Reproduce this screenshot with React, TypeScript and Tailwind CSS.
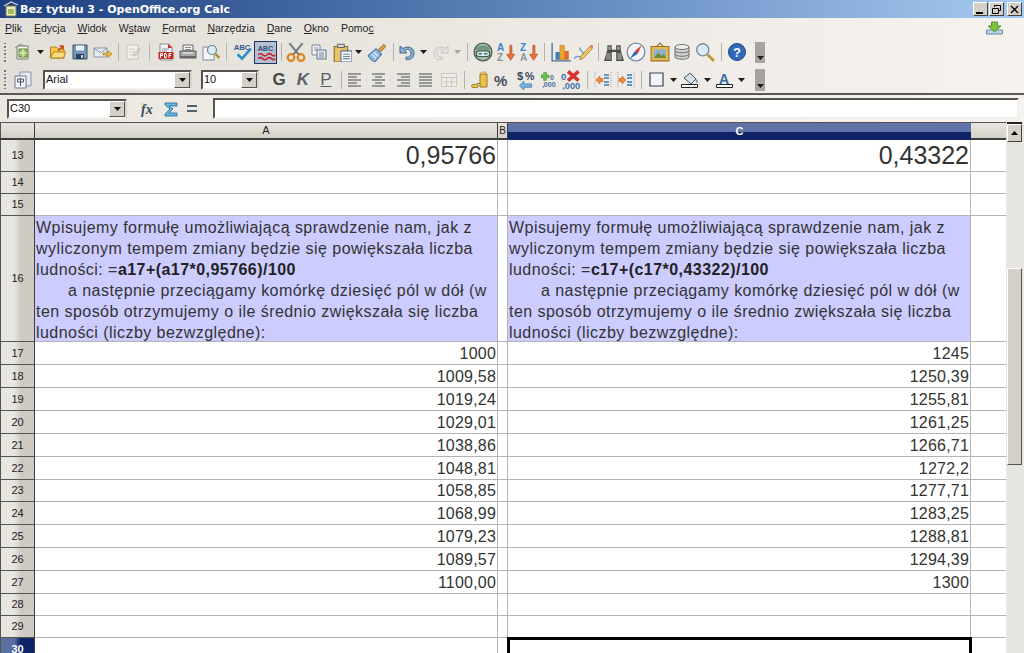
import type { ReactNode } from "react";

const arial = "font-['Liberation_Sans',Arial,sans-serif]";
const tahoma = "font-['DejaVu_Sans',Tahoma,sans-serif]";

function Svg({ children, size = "w-[18px] h-[18px]" }: { children: ReactNode; size?: string }) {
  return (
    <svg viewBox="0 0 18 18" className={size}>
      {children}
    </svg>
  );
}

const NewDoc = () => (
  <Svg>
    <path d="M3 3h11v13H3z" fill="#f4f4ea" stroke="#6f7a66" />
    <path d="M5 6h8v8H5z" fill="#a4c46c" stroke="#5b7a34" />
    <path d="M9 6v8M5 10h8" stroke="#eef5dc" />
    <path d="M1 5l5-4 5 2" fill="none" stroke="#8a9a80" />
  </Svg>
);
const OpenFolder = () => (
  <Svg size="w-[20px] h-[18px]">
    <path d="M1.5 15V4h6l1.5 2h6v9z" fill="#f6c64a" stroke="#b0801c" />
    <path d="M1.5 15l3-6h12l-2 6z" fill="#fbdc7c" stroke="#b0801c" />
    <path d="M9 8l5-5M10.5 3H14v3.5" fill="none" stroke="#c8471a" strokeWidth="1.6" />
  </Svg>
);
const Save = () => (
  <Svg>
    <path d="M2 2h14v14H2z" fill="#7797b8" stroke="#3a5270" />
    <path d="M5 2.5h8v5H5z" fill="#eef2f6" />
    <path d="M5 11h8v5H5z" fill="#26405e" />
    <path d="M10 12h2v3h-2z" fill="#c6d2de" />
  </Svg>
);
const Mail = () => (
  <Svg size="w-[20px] h-[18px]">
    <path d="M1 5h13v9H1z" fill="#e6ecf5" stroke="#8793a8" />
    <path d="M1 5l6.500 5L14 5" fill="none" stroke="#8793a8" />
    <path d="M10 10h5V7.500l4 3.500-4 3.500V12h-5z" fill="#f3c03e" stroke="#a87c1a" strokeWidth=".7" />
  </Svg>
);
const EditDoc = () => (
  <Svg>
    <path d="M3 2h11v14H3z" fill="#f2f0ea" stroke="#c6c4bc" />
    <path d="M5 6h6M5 9h6M5 12h4" stroke="#cfcdc6" />
    <path d="M9 12l6-7 1.500 1.500-6 7z" fill="#dedcd4" stroke="#c0beb6" />
  </Svg>
);
const Pdf = () => (
  <Svg>
    <path d="M3 1h9l3 3v13H3z" fill="#f2f2f4" stroke="#8a8a92" />
    <path d="M11 1l4 4h-4z" fill="#c22" />
    <path d="M1.500 9h15v7h-15z" fill="#c42a24" />
    <path d="M5 6h7M5 8h5" stroke="#8d96b0" />
    <path d="M3.500 15v-4.500h2v2h-2M7.500 15v-4.500h1.500l.5 2-.5 2.500zM12 15v-4.500h2.500M12 12.500h2" fill="none" stroke="#fff" />
  </Svg>
);
const Printer = () => (
  <Svg size="w-[20px] h-[18px]">
    <path d="M5 2h10v6H5z" fill="#f4f4f2" stroke="#66686c" />
    <path d="M7 4.500h6M7 6.500h6" stroke="#8a8c90" />
    <path d="M2 8h16v7H2z" fill="#a8aaa8" stroke="#55575a" />
    <path d="M2.500 13h15v2h-15z" fill="#66686a" />
    <path d="M5 10h10" stroke="#e4e4e0" strokeWidth="1.400" />
  </Svg>
);
const Preview = () => (
  <Svg size="w-[20px] h-[18px]">
    <path d="M2 4h11v13H2z" fill="#f5f5f5" stroke="#7d8ca2" />
    <circle cx="11" cy="7" r="4.500" fill="#d9ebf6" stroke="#70808c" strokeWidth="1.200" />
    <path d="M14 10.500l4.500 4.500" stroke="#b48c30" strokeWidth="2.400" />
  </Svg>
);
const Spell = () => (
  <Svg size="w-[22px] h-[20px]">
    <text x="1.500" y="7.500" fontSize="7" fontWeight="700" fill="#335a92" className={arial}>ABC</text>
    <path d="M5 11l4 4 8-9" fill="none" stroke="#2f8ec8" strokeWidth="2.400" />
  </Svg>
);
const SpellAuto = () => (
  <Svg size="w-[20px] h-[20px]">
    <text x="1.500" y="8" fontSize="6.500" fontWeight="700" fill="#2f4f7a" className={arial}>ABC</text>
    <path d="M2 11.500q2-2 4 0t4 0 4 0 3 0M2 15q2-2 4 0t4 0 4 0 3 0" fill="none" stroke="#c8222a" strokeWidth="1.400" />
  </Svg>
);
const Scissors = () => (
  <Svg size="w-[20px] h-[20px]">
    <path d="M3 1l9 11M15 1L6 12" stroke="#74787c" strokeWidth="1.800" />
    <circle cx="4.500" cy="14" r="3" fill="none" stroke="#dd8420" strokeWidth="2" />
    <circle cx="13.500" cy="14" r="3" fill="none" stroke="#dd8420" strokeWidth="2" />
  </Svg>
);
const Copy = () => (
  <Svg>
    <path d="M2 2h8v10H2z" fill="#f0f2f6" stroke="#7a8698" />
    <path d="M4 5h4M4 7h4" stroke="#8a96a8" />
    <path d="M7 7h9v9H7z" fill="#e6eaf2" stroke="#64748a" />
    <path d="M9 10h5M9 12h5M9 14h5" stroke="#7a869a" />
  </Svg>
);
const Paste = () => (
  <Svg size="w-[20px] h-[20px]">
    <path d="M2 4h12v14H2z" fill="#e9c36c" stroke="#8f6b20" />
    <path d="M5 2h6v3H5z" fill="#d8d8d4" stroke="#6a6a66" />
    <path d="M8 8h10v10H8z" fill="#f0f3f8" stroke="#64748a" />
    <path d="M10 11h6M10 13h6M10 15h6" stroke="#7a869a" />
  </Svg>
);
const Brush = () => (
  <Svg size="w-[20px] h-[20px]">
    <path d="M11 7l5-5 2 2-5 5z" fill="#d2a248" stroke="#8a6a24" strokeWidth=".7" />
    <path d="M2 12l7-6 5 5-6 7c-2-1-5-3-6-6z" fill="#8fb8e0" stroke="#4b76a6" />
    <path d="M5 11l4 4M7 9l4 4" stroke="#e6f0fa" />
  </Svg>
);
const Undo = ({ off }: { off?: boolean }) => (
  <Svg size={off ? "w-[18px] h-[18px] -scale-x-100" : "w-[18px] h-[18px]"}>
    <path
      d="M2 3v7h7L6.500 7.500C9 5.500 13 6.500 13 10s-3 4.500-5 4v2.500c5 1 8-2 8-6.500 0-5.500-6-7.500-11-4.500z"
      fill={off ? "#e8e6e0" : "#88aed2"}
      stroke={off ? "#c4c2bc" : "#44688e"}
    />
  </Svg>
);
const Navigator = () => (
  <Svg size="w-[20px] h-[20px]">
    <circle cx="9" cy="9" r="8" fill="#a4bca0" stroke="#4c5a54" strokeWidth="1.200" />
    <path d="M2 7c3-5 11-5 14 0z" fill="#6f9678" />
    <rect x="3" y="8" width="12" height="5" rx="2.500" fill="#e2ebe6" stroke="#3c5a58" />
    <path d="M5 10.500h3M10 10.500h3" stroke="#2f6f7c" strokeWidth="1.400" />
  </Svg>
);
const SortAZ = ({ flip }: { flip?: boolean }) => (
  <Svg size="w-[20px] h-[20px]">
    <text x="1" y="8" fontSize="9" fontWeight="700" fill="#3a84cc" className={arial}>{flip ? "Z" : "A"}</text>
    <text x="1" y="17" fontSize="9" fontWeight="700" fill="#8a949c" className={arial}>{flip ? "A" : "Z"}</text>
    <path d="M12.500 3h1.800v8h2.500l-3.600 5.500L9.500 11h3z" fill="#e8703a" stroke="#b0481c" strokeWidth=".6" />
  </Svg>
);
const Chart = () => (
  <Svg size="w-[20px] h-[20px]">
    <path d="M1 1v16h17" fill="none" stroke="#4c6f94" strokeWidth="1.200" />
    <path d="M4 9h4v7H4z" fill="#3f80c4" />
    <path d="M8 3h4v13H8z" fill="#eca42c" stroke="#b07c20" strokeWidth=".5" />
    <path d="M12 8h4v8h-4z" fill="#e26a2c" />
  </Svg>
);
const Pen = () => (
  <Svg size="w-[20px] h-[20px]">
    <path d="M1 15c3-5 6 1 8-3s-5-4-2-7" fill="none" stroke="#6f9ed0" strokeWidth="1.300" />
    <path d="M7 13l9-10 2 2-9 10-3 1z" fill="#f0c868" stroke="#a8782c" strokeWidth=".7" />
    <path d="M15 4l2 2 1.500-2-1.500-1.500z" fill="#e07c70" />
  </Svg>
);
const Binoculars = () => (
  <Svg size="w-[20px] h-[20px]">
    <path d="M3 3h4v4h4V3h4v4l3 10h-7V9H7v8H0l3-10z" fill="#4c4c48" />
    <path d="M2 10h4v6H2zM12 10h4v6h-4z" fill="#8a8a84" />
    <path d="M4 4h2v3H4zM12 4h2v3h-2z" fill="#a6a69e" />
  </Svg>
);
const Compass = () => (
  <Svg size="w-[20px] h-[20px]">
    <circle cx="9" cy="9" r="8" fill="#f2f4f8" stroke="#7d8ca6" strokeWidth="1.200" />
    <path d="M14 3l-3.500 7.500L8 8z" fill="#d63a2c" />
    <path d="M3.500 15L8 8l2.500 2.500z" fill="#2f62b4" />
  </Svg>
);
const Gallery = () => (
  <Svg size="w-[20px] h-[20px]">
    <path d="M1 4h16v13H1z" fill="#eab84c" stroke="#9a7420" />
    <path d="M3.500 6.500h11v8h-11z" fill="#8fb2c8" />
    <path d="M3.500 14.500l4-5 3 3 2-2 2 4z" fill="#6c8c3c" />
    <path d="M6 4l3-3 3 3" fill="none" stroke="#9a7420" />
  </Svg>
);
const Database = () => (
  <Svg>
    <path d="M2 4v10c0 3 14 3 14 0V4z" fill="#d0d2d0" stroke="#6e7270" />
    <ellipse cx="9" cy="4" rx="7" ry="2.500" fill="#eeeeea" stroke="#6e7270" />
    <path d="M2 7.500c0 3 14 3 14 0M2 11c0 3 14 3 14 0" fill="none" stroke="#6e7270" />
  </Svg>
);
const Magnifier = () => (
  <Svg size="w-[20px] h-[20px]">
    <circle cx="7" cy="7" r="5.500" fill="#dbeaf6" stroke="#7c8c98" strokeWidth="1.300" />
    <path d="M11 11l6 6" stroke="#c09a3a" strokeWidth="2.600" />
  </Svg>
);
const Help = () => (
  <svg viewBox="0 0 18 18" className="w-[18px] h-[18px]">
    <circle cx="9" cy="9" r="8.500" fill="#2f68b8" stroke="#1f4880" />
    <text x="9" y="14" fontSize="13" fontWeight="700" fill="#fff" textAnchor="middle" className={arial}>?</text>
  </svg>
);

const Styles = () => (
  <Svg>
    <path d="M6 1h11v14H6z" fill="#e4e8ee" stroke="#8d98a8" />
    <path d="M1 5h11v12H1z" fill="#f2f4f8" stroke="#6c7a8c" />
    <path d="M6.500 7v8M3.500 8h6v3h-6z" fill="none" stroke="#4a5a6a" />
  </Svg>
);
const Lines = ({ kind }: { kind: "left" | "center" | "right" | "just" }) => {
  const paths = {
    left: "M1 3h13M1 6h9M1 9h13M1 12h9M1 15h13",
    center: "M2 3h13M5 6h7M2 9h13M5 12h7M2 15h13",
    right: "M3 3h13M7 6h9M3 9h13M7 12h9M3 15h13",
    just: "M2 3h13M2 6h13M2 9h13M2 12h13M2 15h13",
  };
  return (
    <Svg>
      <path d={paths[kind]} stroke="#44484e" strokeWidth="1" />
    </Svg>
  );
};
const MergeGrid = () => (
  <svg viewBox="0 0 16 14" className="w-[16px] h-[14px]">
    <path d="M.5.500h15v13H.5zM.5 4.500h15M.5 9h15M5.500 4.500v9M10.500 4.500v9" fill="#eeece6" stroke="#cac8c0" />
  </svg>
);
const Coins = () => (
  <Svg>
    <path d="M9 3h7v13H9z" fill="#e8c24c" stroke="#9a7a20" />
    <path d="M10.500 1h4l1 2h-6z" fill="#f4dc84" stroke="#9a7a20" strokeWidth=".6" />
    <ellipse cx="4" cy="15" rx="3.500" ry="1.700" fill="#eccb5c" stroke="#9a7a20" />
    <path d="M6 12.500h3" stroke="#9a7a20" />
  </Svg>
);
const Percent = () => (
  <svg viewBox="0 0 18 18" className="w-[18px] h-[18px]">
    <text x="1" y="14.500" fontSize="15" fontWeight="700" fill="#44505c" className={arial}>%</text>
  </svg>
);
const Currency = () => (
  <Svg size="w-[20px] h-[20px]">
    <text x="1" y="9" fontSize="10" fontWeight="700" fill="#39465a" className={arial}>$</text>
    <text x="8" y="9" fontSize="9.500" fontWeight="700" fill="#39465a" className={arial}>%</text>
    <path d="M3 14l4-4v2.500h7v3H7V18z" fill="#7cb4e4" stroke="#3f78ae" strokeWidth=".7" />
  </Svg>
);
const AddDec = () => (
  <Svg size="w-[21px] h-[21px]">
    <path d="M3 1h3v3h3v3H6v3H3V7H0V4h3z" fill="#6cc04c" stroke="#3f7f2c" strokeWidth=".6" />
    <text x="10" y="9" fontSize="8" fontWeight="700" fill="#3f70a8" className={arial}>0</text>
    <text x="1" y="17" fontSize="8" fontWeight="700" fill="#3f70a8" className={arial}>,000</text>
  </Svg>
);
const DelDec = () => (
  <Svg size="w-[21px] h-[21px]">
    <text x="0" y="9" fontSize="8" fontWeight="700" fill="#3f70a8" className={arial}>0</text>
    <text x="1" y="17" fontSize="8" fontWeight="700" fill="#3f70a8" className={arial}>,000</text>
    <path d="M6 2l9 8M15 2l-9 8" stroke="#d8322c" strokeWidth="3" />
  </Svg>
);
const Indent = ({ flip }: { flip?: boolean }) => (
  <Svg>
    <path d="M1 1v16" stroke="#9aa4b0" strokeDasharray="1 1" />
    <path d="M17 1v16" stroke="#9aa4b0" strokeDasharray="1 1" />
    <path d="M10 4h5M10 7h5M10 11h5M10 14h5" stroke="#2f7cc0" strokeWidth="1.300" />
    {flip ? (
      <path d="M2 7.500h3V5l4 4-4 4v-2.500H2z" fill="#f08c34" stroke="#c05c1c" strokeWidth=".6" />
    ) : (
      <path d="M9 7.500H6V5L2 9l4 4v-2.500h3z" fill="#f08c34" stroke="#c05c1c" strokeWidth=".6" />
    )}
  </Svg>
);
const Border = () => (
  <Svg>
    <path d="M2 2h13v13H2z" fill="#f2f4fa" stroke="#3c4048" strokeWidth="1.200" />
  </Svg>
);
const CellBg = () => (
  <Svg>
    <path d="M3 7l6-5 6 6-5 5z" fill="#d6e2ea" stroke="#44505c" />
    <path d="M15 8c2 1 2 3 1 4-1-1-2-2-1-4z" fill="#6c8ea8" />
    <path d="M.5 13.500h16v3H.5z" fill="#fff" stroke="#222" />
  </Svg>
);
const FontColor = () => (
  <Svg>
    <text x="3" y="12.500" fontSize="14" fontWeight="700" fill="#3a6aa8" className={arial}>A</text>
    <path d="M.5 13.500h16v3H.5z" fill="#fff" stroke="#222" />
  </Svg>
);

// little black drop-down triangle next to a tool
function Tri({ w, dim }: { w: string; dim?: boolean }) {
  return (
    <div className={`${w} flex items-center justify-center`}>
      <svg viewBox="0 0 7 4" className="w-[7px] h-[4px]">
        <path d="M0 0h7L3.500 4z" fill={dim ? "#a8a6a0" : "#1c1c1c"} />
      </svg>
    </div>
  );
}

function Sep({ w }: { w: string }) {
  return (
    <div className={`${w} flex justify-center`}>
      <div className="w-px h-[18px] bg-[#b4b2ac]" />
    </div>
  );
}

function Tool({ w, children, className = "" }: { w: string; children: ReactNode; className?: string }) {
  return <div className={`${w} flex items-center justify-center ${className}`}>{children}</div>;
}

function Grip() {
  return (
    <div className="w-[14px] h-full flex flex-col justify-center gap-[2px] pl-[4px]">
      {[0, 1, 2, 3, 4, 5].map((i) => (
        <div key={i} className="w-[2px] h-[1.500px] bg-[#77756f]" />
      ))}
    </div>
  );
}

function EndHandle({ className }: { className: string }) {
  return (
    <div className={`w-[10px] bg-[#a6a49e] flex items-end justify-center pb-[3px] ${className}`}>
      <svg viewBox="0 0 7 4" className="w-[7px] h-[4px]">
        <path d="M0 0h7L3.500 4z" fill="#1c1c1c" />
      </svg>
    </div>
  );
}

function ComboButton() {
  return (
    <div className="w-[16px] h-[16px] bg-[#d4d0c8] border border-t-[#fff] border-l-[#fff] border-r-[#55534f] border-b-[#55534f] flex items-center justify-center">
      <svg viewBox="0 0 7 4" className="w-[7px] h-[4px]">
        <path d="M0 0h7L3.500 4z" fill="#111" />
      </svg>
    </div>
  );
}

function Combo({ value, w, className = "" }: { value: string; w: string; className?: string }) {
  return (
    <div className={`${w} h-[20px] bg-white border-2 border-t-[#55534f] border-l-[#55534f] border-r-[#d8d5ce] border-b-[#f4f2ee] flex items-center justify-between ${className}`}>
      <span className={`${arial} text-[11px] leading-none pl-[1px] text-[#111]`}>{value}</span>
      <ComboButton />
    </div>
  );
}

function WinBtn({ children }: { children: ReactNode }) {
  return (
    <div className="w-[15px] h-[14px] bg-[#d4d0c8] border border-t-[#fff] border-l-[#fff] border-r-[#444] border-b-[#444] flex items-center justify-center">
      {children}
    </div>
  );
}

function TitleBar() {
  return (
    <div className="h-[18px] bg-gradient-to-r from-[#1d3e80] via-[#5c82b8] to-[#a6caf0] flex items-center justify-between pl-[3px] pr-[2px]">
      <div className="flex items-center gap-[1px]">
        <svg viewBox="0 0 16 16" className="w-[16px] h-[16px]">
          <path d="M3 5h10v10H3z" fill="#efe9c8" stroke="#7b7a4c" />
          <path d="M5 8h6v5H5z" fill="#9fbf5f" />
          <path d="M1 5l7-4 7 3" fill="none" stroke="#cfd8c8" strokeWidth="1.200" />
        </svg>
        <span className={`${tahoma} text-[11px] font-bold text-white leading-none`}>Bez tytułu 3 - OpenOffice.org Calc</span>
      </div>
      <div className="flex items-center">
        <WinBtn>
          <div className="w-[7px] h-[2px] bg-black mt-[7px] -ml-[2px]" />
        </WinBtn>
        <div className="w-[1px]" />
        <WinBtn>
          <svg viewBox="0 0 9 9" className="w-[9px] h-[9px]">
            <path d="M2.500 2V.5h6v5H7M.5 3.500h6v5h-6z" fill="none" stroke="#000" />
          </svg>
        </WinBtn>
        <div className="w-[3px]" />
        <WinBtn>
          <svg viewBox="0 0 9 9" className="w-[9px] h-[9px]">
            <path d="M1 1l7 7M8 1L1 8" stroke="#000" strokeWidth="1.300" />
          </svg>
        </WinBtn>
      </div>
    </div>
  );
}

const menu: [string, string, string][] = [
  ["", "P", "lik"],
  ["", "E", "dycja"],
  ["", "W", "idok"],
  ["W", "s", "taw"],
  ["", "F", "ormat"],
  ["", "N", "arzędzia"],
  ["", "D", "ane"],
  ["", "O", "kno"],
  ["Pomo", "c", ""],
];

function MenuBar() {
  return (
    <div className="h-[20px] flex items-center justify-between pl-[5px] pr-[21px]">
      <div className={`${arial} flex gap-[12px] text-[10.500px] leading-none text-[#222]`}>
        {menu.map(([a, u, b]) => (
          <span key={a + u + b}>
            {a}
            <span className="underline">{u}</span>
            {b}
          </span>
        ))}
      </div>
      <svg viewBox="0 0 17 14" className="w-[17px] h-[14px]">
        <path d="M.5 9h16v4H.5z" fill="#bcd6e6" stroke="#5f8aa8" />
        <path d="M5.500 1h6v4h3.500l-6.500 6L2 5h3.500z" fill="#7cc43c" stroke="#3f7f24" strokeWidth=".8" />
      </svg>
    </div>
  );
}

function TopToolbar() {
  return (
    <div className="h-[28px] flex items-center">
      <Grip />
      <Tool w="w-[18px]"><NewDoc /></Tool>
      <Tri w="w-[16px]" />
      <Tool w="w-[20px]"><OpenFolder /></Tool>
      <Tool w="w-[24px]"><Save /></Tool>
      <Tool w="w-[20px]"><Mail /></Tool>
      <Sep w="w-[12px]" />
      <Tool w="w-[18px]"><EditDoc /></Tool>
      <Sep w="w-[14px]" />
      <Tool w="w-[20px]"><Pdf /></Tool>
      <Tool w="w-[22px]"><Printer /></Tool>
      <Tool w="w-[24px]"><Preview /></Tool>
      <Sep w="w-[8px]" />
      <Tool w="w-[24px]"><Spell /></Tool>
      <Tool w="w-[23px]" className="h-[23px] bg-[#b4bfd4] border border-[#1f3560]"><SpellAuto /></Tool>
      <Sep w="w-[8px]" />
      <Tool w="w-[22px]"><Scissors /></Tool>
      <Tool w="w-[24px]"><Copy /></Tool>
      <Tool w="w-[22px]"><Paste /></Tool>
      <Tri w="w-[10px]" />
      <Tool w="w-[26px]"><Brush /></Tool>
      <Sep w="w-[8px]" />
      <Tool w="w-[20px]"><Undo /></Tool>
      <Tri w="w-[12px]" />
      <Tool w="w-[24px]"><Undo off /></Tool>
      <Tri w="w-[8px]" dim />
      <Sep w="w-[12px]" />
      <Tool w="w-[20px]"><Navigator /></Tool>
      <Tool w="w-[26px]"><SortAZ /></Tool>
      <Tool w="w-[20px]"><SortAZ flip /></Tool>
      <Sep w="w-[10px]" />
      <Tool w="w-[24px]"><Chart /></Tool>
      <Tool w="w-[20px]"><Pen /></Tool>
      <Sep w="w-[10px]" />
      <Tool w="w-[22px]"><Binoculars /></Tool>
      <Tool w="w-[22px]"><Compass /></Tool>
      <Tool w="w-[26px]"><Gallery /></Tool>
      <Tool w="w-[18px]"><Database /></Tool>
      <Tool w="w-[28px]"><Magnifier /></Tool>
      <Sep w="w-[4px]" />
      <Tool w="w-[28px]"><Help /></Tool>
      <EndHandle className="ml-[4px] h-[21px]" />
    </div>
  );
}

function LetterTool({ w, children, className }: { w: string; children: ReactNode; className: string }) {
  return <div className={`${w} flex items-center justify-center ${arial} text-[17px] leading-none ${className}`}>{children}</div>;
}

function FormatToolbar() {
  return (
    <div className="h-[27px] flex items-center">
      <Grip />
      <Tool w="w-[18px]"><Styles /></Tool>
      <div className="w-[11px]" />
      <Combo value="Arial" w="w-[149px]" />
      <div className="w-[9px]" />
      <Combo value="10" w="w-[58px]" />
      <div className="w-[8px]" />
      <LetterTool w="w-[24px]" className="font-bold text-[#44484c]">G</LetterTool>
      <LetterTool w="w-[24px]" className="font-bold italic text-[#5a6068]">K</LetterTool>
      <LetterTool w="w-[22px]" className="text-[#5a6068] underline">P</LetterTool>
      <Sep w="w-[8px]" />
      <Tool w="w-[22px]"><Lines kind="left" /></Tool>
      <Tool w="w-[24px]"><Lines kind="center" /></Tool>
      <Tool w="w-[24px]"><Lines kind="right" /></Tool>
      <Tool w="w-[22px]"><Lines kind="just" /></Tool>
      <Tool w="w-[24px]"><MergeGrid /></Tool>
      <Sep w="w-[6px]" />
      <Tool w="w-[26px]"><Coins /></Tool>
      <Tool w="w-[18px]"><Percent /></Tool>
      <Tool w="w-[30px]"><Currency /></Tool>
      <Tool w="w-[16px]"><AddDec /></Tool>
      <Tool w="w-[28px]"><DelDec /></Tool>
      <Sep w="w-[4px]" />
      <Tool w="w-[28px]"><Indent /></Tool>
      <Tool w="w-[18px]"><Indent flip /></Tool>
      <Sep w="w-[12px]" />
      <Tool w="w-[20px]"><Border /></Tool>
      <Tri w="w-[12px]" />
      <Tool w="w-[22px]"><CellBg /></Tool>
      <Tri w="w-[12px]" />
      <Tool w="w-[24px]"><FontColor /></Tool>
      <Tri w="w-[8px]" />
      <EndHandle className="ml-[10px] h-[22px]" />
    </div>
  );
}

function FormulaBar() {
  return (
    <div className="h-[29px] border-t-2 border-t-[#5a5955] flex items-center pl-[7px] pr-[5px]">
      <Combo value="C30" w="w-[120px]" />
      <div className="w-[12px]" />
      <svg viewBox="0 0 18 18" className="w-[18px] h-[18px]">
        <circle cx="3" cy="4" r="1" fill="#e8c84c" />
        <text x="2" y="14" fontSize="14" fontStyle="italic" fontWeight="700" fill="#38485c" className="font-['Liberation_Serif',serif]">fx</text>
      </svg>
      <div className="w-[6px]" />
      <svg viewBox="0 0 16 16" className="w-[16px] h-[16px]">
        <path d="M2 2h12v3H6l4 3-4 4h8v3H2v-2l5-5-5-4z" fill="#68b8e0" stroke="#1f6a9a" strokeWidth=".8" />
      </svg>
      <div className="w-[6px]" />
      <svg viewBox="0 0 14 10" className="w-[14px] h-[10px]">
        <path d="M2 2h10M2 7h10" stroke="#59636e" strokeWidth="1.800" />
      </svg>
      <div className="w-[14px]" />
      <div className="flex-1 h-[21px] bg-white border-2 border-t-[#55534f] border-l-[#55534f] border-r-[#f2f0ec] border-b-[#f2f0ec]" />
    </div>
  );
}

type Row = { n: number; h: string; a?: string; c?: string; big?: boolean };

const rows: Row[] = [
  { n: 13, h: "h-[32px]", a: "0,95766", c: "0,43322", big: true },
  { n: 14, h: "h-[22px]" },
  { n: 15, h: "h-[22px]" },
  { n: 17, h: "h-[23px]", a: "1000", c: "1245" },
  { n: 18, h: "h-[23px]", a: "1009,58", c: "1250,39" },
  { n: 19, h: "h-[23px]", a: "1019,24", c: "1255,81" },
  { n: 20, h: "h-[23px]", a: "1029,01", c: "1261,25" },
  { n: 21, h: "h-[23px]", a: "1038,86", c: "1266,71" },
  { n: 22, h: "h-[23px]", a: "1048,81", c: "1272,2" },
  { n: 23, h: "h-[22px]", a: "1058,85", c: "1277,71" },
  { n: 24, h: "h-[23px]", a: "1068,99", c: "1283,25" },
  { n: 25, h: "h-[23px]", a: "1079,23", c: "1288,81" },
  { n: 26, h: "h-[23px]", a: "1089,57", c: "1294,39" },
  { n: 27, h: "h-[23px]", a: "1100,00", c: "1300" },
  { n: 28, h: "h-[22px]" },
  { n: 29, h: "h-[22px]" },
];

function RowHead({ n, active }: { n: number; active?: boolean }) {
  return (
    <div
      className={`w-[35px] shrink-0 h-full border-r border-r-[#3c3c3c] border-b border-b-[#55534f] border-l border-l-[#55534f] flex items-center justify-center ${arial} text-[11px] leading-none ${
        active
          ? "bg-gradient-to-r from-[#5a6fa4] from-40% to-[#0d2468] to-60% text-white font-bold"
          : "bg-gradient-to-r from-[#e8e6e0] from-40% to-[#cfcbc3] to-60% text-[#222]"
      }`}
    >
      {n}
    </div>
  );
}

function Cell({ w, value, big }: { w: string; value?: string; big?: boolean }) {
  return (
    <div
      className={`${w} shrink-0 h-full border-r border-r-[#b4b4b4] border-b border-b-[#b4b4b4] flex items-end justify-end pr-[1px] ${arial} text-[#333] ${
        big ? "text-[25px] leading-[31px]" : "text-[16px] leading-[20px] tracking-[0.2px]"
      }`}
    >
      {value}
    </div>
  );
}

function DataRow({ row }: { row: Row }) {
  return (
    <div className={`${row.h} flex`}>
      <RowHead n={row.n} />
      <Cell w="w-[463px]" value={row.a} big={row.big} />
      <Cell w="w-[10px]" />
      <Cell w="w-[463px]" value={row.c} big={row.big} />
      <div className="flex-1 border-b border-b-[#b4b4b4]" />
    </div>
  );
}

function NoteCell({ formula, w }: { formula: string; w: string }) {
  return (
    <div className={`${w} shrink-0 h-full bg-[#ccccff] border-r border-r-[#b4b4b4] border-b border-b-[#b4b4b4] ${arial} text-[16px] leading-[21px] tracking-[0.45px] text-[#333] pl-[1px] pt-[1px] whitespace-nowrap overflow-hidden`}>
      <div>Wpisujemy formułę umożliwiającą sprawdzenie nam, jak z</div>
      <div>wyliczonym tempem zmiany będzie się powiększała liczba</div>
      <div>
        ludności: =<b className="font-bold text-[#222]">{formula}</b>
      </div>
      <div className="pl-[32px]">a następnie przeciągamy komórkę dziesięć pól w dół (w</div>
      <div>ten sposób otrzymujemy o ile średnio zwiększała się liczba</div>
      <div>ludności (liczby bezwzględne):</div>
    </div>
  );
}

function Sheet() {
  return (
    <div className="flex-1 min-w-0 overflow-hidden">
      <div className="h-[18px] flex bg-gradient-to-b from-[#e8e6e0] to-[#d4d0c8] border-t border-t-[#55534f] border-b-2 border-b-[#3c3c3c]">
        <div className="w-[35px] shrink-0 border-l border-l-[#55534f] border-r border-r-[#3c3c3c]" />
        <div className={`w-[463px] shrink-0 border-r border-r-[#3c3c3c] flex items-center justify-center ${arial} text-[11px] leading-none text-[#222]`}>A</div>
        <div className={`w-[10px] shrink-0 border-r border-r-[#3c3c3c] flex items-center justify-center ${arial} text-[10px] leading-none text-[#222]`}>B</div>
        <div className={`w-[463px] shrink-0 bg-gradient-to-b from-[#5f73a8] from-50% to-[#0f2468] to-50% -mb-[2px] flex items-center justify-center ${arial} text-[11px] font-bold leading-none text-white`}>C</div>
      </div>
      {rows.slice(0, 3).map((r) => <DataRow key={r.n} row={r} />)}
      <div className="h-[126px] flex">
        <RowHead n={16} />
        <NoteCell w="w-[463px]" formula="a17+(a17*0,95766)/100" />
        <Cell w="w-[10px]" />
        <NoteCell w="w-[463px]" formula="c17+(c17*0,43322)/100" />
        <div className="flex-1 border-b border-b-[#b4b4b4]" />
      </div>
      {rows.slice(3).map((r) => <DataRow key={r.n} row={r} />)}
      <div className="h-[23px] flex">
        <RowHead n={30} active />
        <Cell w="w-[463px]" />
        <Cell w="w-[10px]" />
        <div className="w-[465px] h-[24px] shrink-0 border-[3px] border-black -ml-[1px] -mt-[1px]" />
      </div>
    </div>
  );
}

function ScrollBar() {
  return (
    <div className="w-[18px] shrink-0 bg-[#e8e6e0] flex flex-col">
      <div className="h-[2px] bg-[#222] ml-[1px] mr-[2px]" />
      <div className="h-[18px] ml-[1px] mr-[2px] bg-[#d4d0c8] border border-t-white border-l-white border-r-[#444] border-b-[#444] flex items-center justify-center">
        <svg viewBox="0 0 7 4" className="w-[7px] h-[4px]">
          <path d="M0 4h7L3.500 0z" fill="#000" />
        </svg>
      </div>
      <div className="h-[126px]" />
      <div className="h-[197px] ml-[1px] mr-[2px] bg-[#d4d0c8] border border-t-white border-l-white border-r-[#555] border-b-[#555]" />
    </div>
  );
}

export default function App() {
  return (
    <div className="w-[1024px] h-[653px] overflow-hidden flex flex-col bg-[#f0ede8]">
      <TitleBar />
      <div className="bg-gradient-to-r from-[#e2dfd8] to-[#f6f3ef]">
        <MenuBar />
        <TopToolbar />
        <FormatToolbar />
      </div>
      <div className="bg-gradient-to-r from-[#ebe8e2] to-[#f6f3ef]">
        <FormulaBar />
      </div>
      <div className="flex-1 min-h-0 flex bg-white">
        <Sheet />
        <ScrollBar />
      </div>
    </div>
  );
}
